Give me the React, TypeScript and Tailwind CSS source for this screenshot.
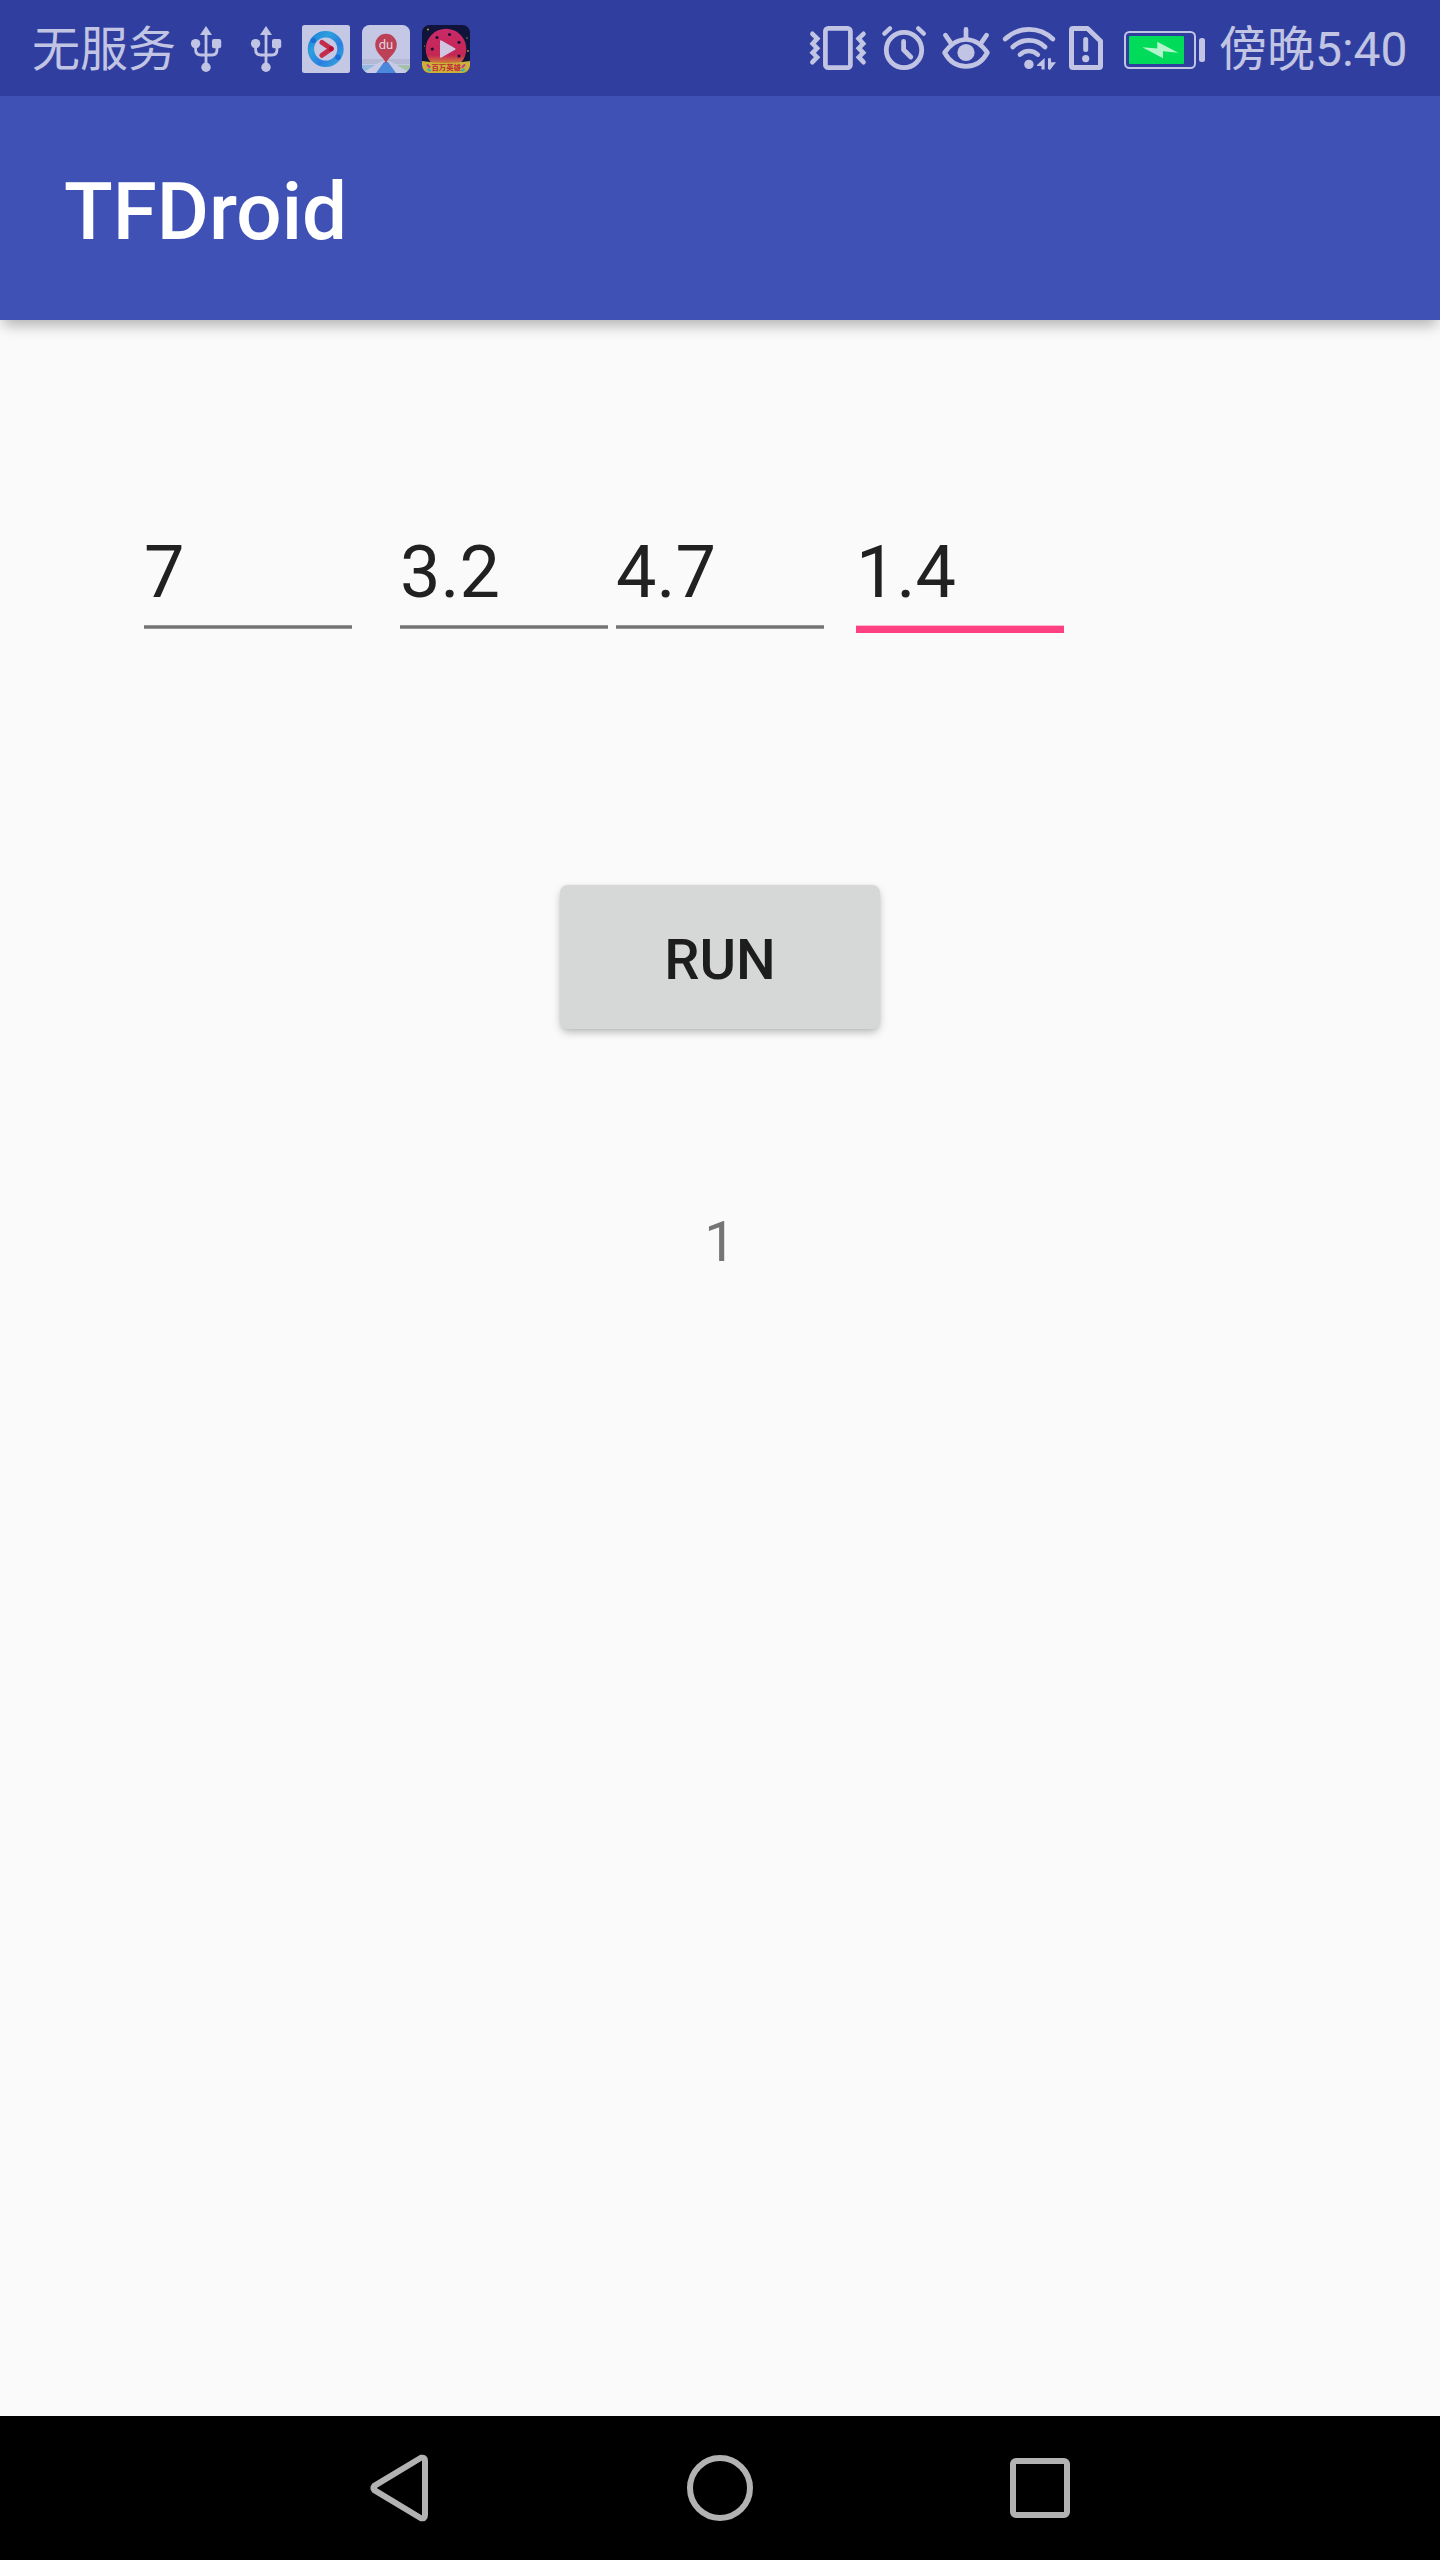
import React from "react";

const TINT = "#c1c5e3";

function UsbIcon() {
  return (
    <svg className="h-[96px] w-[60px]" viewBox="176 0 60 96" fill={TINT}>
      <path d="M206 26L212 35H200Z" />
      <path d="M206 30V66" stroke={TINT} strokeWidth="2.8" />
      <circle cx="206" cy="67.2" r="4.7" />
      <circle cx="195.6" cy="43.6" r="4.7" />
      <rect x="212" y="39" width="9.2" height="9.2" rx="2" />
      <path d="M195.6 46V49.5Q195.6 55 201 55H212Q217 55 217 49.5V46" fill="none" stroke={TINT} strokeWidth="2.8" />
    </svg>
  );
}

function VideoAppIcon() {
  return (
    <svg className="h-[96px] w-[60px]" viewBox="296 0 60 96">
      <defs>
        <linearGradient id="ring" x1="0" y1="0" x2="1" y2="1">
          <stop offset="0" stopColor="#1f82dc" />
          <stop offset="0.3" stopColor="#2e9fdc" />
          <stop offset="0.65" stopColor="#2a7fe0" />
          <stop offset="1" stopColor="#36a6dc" />
        </linearGradient>
      </defs>
      <rect x="302" y="25" width="48" height="48" rx="2.5" fill="#c4c8e4" />
      <circle cx="325.7" cy="49" r="14.8" fill="none" stroke="url(#ring)" strokeWidth="6.4" />
      <circle cx="313.4" cy="40.5" r="2.7" fill="#1a70d8" />
      <circle cx="338" cy="57.3" r="2.7" fill="#1a70d8" />
      <path d="M322 42.5L331.2 48.8L322 55.3" fill="none" stroke="#c42c4c" strokeWidth="5" strokeLinecap="round" strokeLinejoin="round" />
      <circle cx="331.2" cy="48.8" r="2.5" fill="#b80d32" />
    </svg>
  );
}

function MapAppIcon() {
  return (
    <svg className="h-[96px] w-[60px]" viewBox="356 0 60 96">
      <defs>
        <clipPath id="mapClip">
          <rect x="362" y="25" width="48" height="48" rx="7.5" />
        </clipPath>
      </defs>
      <g clipPath="url(#mapClip)">
        <rect x="362" y="25" width="48" height="48" fill="#c4c8e4" />
        <rect x="362" y="59" width="48" height="14" fill="#b6b9d6" />
        <path d="M362 65L378 64L366 73H362Z" fill="#93b9df" />
        <path d="M410 65L393 64L403 73H410Z" fill="#a4c2a8" />
        <path d="M362 64.5H410" stroke="#c4c8e4" strokeWidth="1.2" />
        <path d="M362 73L382 61H390L410 73Z" fill="#c8cbe6" />
        <path d="M384 62H388L396 73H376Z" fill="#4b88db" />
      </g>
      <path d="M386 64C384.5 57 375.2 54 375.2 44.5A10.8 10.8 0 0 1 396.8 44.5C396.8 54 387.5 57 386 64Z" fill="#bd4156" />
      <text x="386" y="49.2" textAnchor="middle" fontSize="13" className="font-['Roboto',sans-serif]" fill="#dfd3e4">du</text>
    </svg>
  );
}

function QuizAppIcon() {
  return (
    <svg className="h-[96px] w-[60px]" viewBox="416 0 60 96">
      <defs>
        <clipPath id="quizClip">
          <rect x="422" y="25" width="48" height="48" rx="7.5" />
        </clipPath>
        <linearGradient id="melon" x1="0" y1="0" x2="0" y2="1">
          <stop offset="0" stopColor="#ca2a68" />
          <stop offset="0.65" stopColor="#c42654" />
          <stop offset="0.88" stopColor="#cf8a34" />
          <stop offset="1" stopColor="#cfae34" />
        </linearGradient>
      </defs>
      <g clipPath="url(#quizClip)">
        <rect x="422" y="25" width="48" height="48" fill="#10133a" />
        <circle cx="446" cy="49" r="20.3" fill="url(#melon)" />
        <g fill="#1a0f38">
          <circle cx="449.5" cy="34.5" r="1.6" />
          <circle cx="437" cy="37.5" r="1.6" />
          <circle cx="459" cy="42.3" r="1.6" />
          <circle cx="432.3" cy="49" r="1.6" />
          <circle cx="459" cy="56" r="1.6" />
        </g>
        <g fill="#b5a43a">
          <circle cx="428" cy="29.5" r="1" />
          <circle cx="467" cy="38" r=".7" />
          <circle cx="468" cy="51" r=".9" />
          <circle cx="424.5" cy="46" r=".6" />
        </g>
        <path d="M441 41.3L454.5 49L441 56.7Z" fill="#d0c6e2" stroke="#d0c6e2" strokeWidth="2" strokeLinejoin="round" />
        <path d="M422 61Q446 65 470 61V73H422Z" fill="#cbb137" />
        <path d="M427.5 65L429.5 67M464.5 65L462.5 67" stroke="#c03a9c" strokeWidth="2" strokeLinecap="round" />
        <path d="M428 69.5L430 70.5M464 69.5L462 70.5" stroke="#2cb2c4" strokeWidth="2" strokeLinecap="round" />
        <text x="446.2" y="70.4" textAnchor="middle" fontSize="7.4" fontWeight="700" className="font-['Noto_Sans_CJK_SC',sans-serif]" fill="#c0283c">百万英雄</text>
      </g>
    </svg>
  );
}

function VibrateIcon() {
  return (
    <svg className="h-[96px] w-[72px]" viewBox="802 0 72 96" fill="none" stroke={TINT} strokeWidth="4.7">
      <rect x="825.4" y="28.4" width="25" height="39.3" rx="2.8" />
      <g strokeWidth="4.6" strokeLinecap="round" strokeLinejoin="miter">
        <path d="M812.4 33.8L817.3 38.6L812.7 43.7L817.1 48.2L812.7 52.8L817.1 57.2L812.4 62.2" />
        <path d="M863.5 33.8L858.6 38.6L863.2 43.7L858.8 48.2L863.2 52.8L858.8 57.2L863.5 62.2" />
      </g>
    </svg>
  );
}

function AlarmIcon() {
  return (
    <svg className="h-[96px] w-[60px]" viewBox="874 0 60 96" fill="none" stroke={TINT} strokeWidth="4.8" strokeLinecap="round" strokeLinejoin="round">
      <circle cx="904" cy="50" r="17.7" />
      <path d="M903.6 41.5V49.8L910.8 57" />
      <path d="M884.4 33.6L890 28.4M918.2 28.4L923.8 33.6" strokeWidth="4.4" />
    </svg>
  );
}

function EyeIcon() {
  return (
    <svg className="h-[96px] w-[62px]" viewBox="934 0 62 96" fill="none" stroke={TINT} strokeWidth="4.7" strokeLinecap="round" strokeLinejoin="round">
      <path d="M944.6 52.7C951 43.5 958 39.5 966 39.5C974 39.5 981 43.5 987.4 52.7C983 61 976 66.4 966 66.4C956 66.4 949 61 944.6 52.7Z" />
      <circle cx="966" cy="52.5" r="8.6" fill={TINT} stroke="none" />
      <path d="M966 29.4V38M945.4 35.2L950.4 42.4M986.6 35.2L981.6 42.4" />
    </svg>
  );
}

function WifiIcon() {
  return (
    <svg className="h-[96px] w-[66px]" viewBox="996 0 66 96" fill="none" stroke={TINT} strokeWidth="4.7" strokeLinecap="round">
      <path d="M1005.2 39A34.3 34.3 0 0 1 1052.8 39" />
      <path d="M1012.8 47A23 23 0 0 1 1045 47" />
      <path d="M1020 54.6A12.8 12.8 0 0 1 1037.8 54.6" />
      <circle cx="1028.9" cy="64.4" r="4.7" fill={TINT} stroke="none" />
      <path d="M1044.6 58V69.6H1041.5V66H1037L1037 65ZM1048 58.2H1051V62.2H1056L1050 70L1048 69Z" fill={TINT} stroke="none" />
    </svg>
  );
}

function SimIcon() {
  return (
    <svg className="h-[96px] w-[50px]" viewBox="1062 0 50 96" fill="none" stroke={TINT} strokeWidth="5" strokeLinecap="round" strokeLinejoin="round">
      <path d="M1073 28.5H1087.5L1100.5 41V66Q1100.5 67.5 1099 67.5H1073Q1071.5 67.5 1071.5 66V30Q1071.5 28.5 1073 28.5Z" />
      <path d="M1085.7 39.4V49.4" />
      <circle cx="1085.7" cy="58.6" r="3.6" fill={TINT} stroke="none" />
    </svg>
  );
}

function BatteryIcon() {
  return (
    <svg className="h-[96px] w-[106px]" viewBox="1112 0 106 96">
      <rect x="1125" y="32" width="70" height="36" rx="4.5" fill="none" stroke={TINT} strokeWidth="2" />
      <rect x="1129" y="36" width="55" height="28" rx="1" fill="#00dc5a" />
      <path d="M1142.3 47.3L1157.3 48.6V41.8L1178.2 52.7L1163 51.3V58.2Z" fill="#b3f4cd" />
      <rect x="1199" y="38" width="6" height="24" rx="2.5" fill={TINT} />
    </svg>
  );
}

function Field({ value, focused = false }: { value: string; focused?: boolean }) {
  return (
    <label className="flex h-[102px] w-[208px] flex-col">
      <input
        defaultValue={value}
        className="h-[84px] w-full bg-transparent p-0 text-[72px] leading-[84px] text-[#212121] outline-none"
      />
      {focused ? (
        <span className="mt-[10px] h-[8px] border-t border-[#ffb8d0] bg-[#ff4081]" />
      ) : (
        <span className="mt-[10px] h-[4px] border-y border-[#959595] bg-[#747474]" />
      )}
    </label>
  );
}

export default function App() {
  return (
    <div className="flex h-[2560px] w-[1440px] flex-col overflow-hidden bg-[#fafafa] font-['Roboto','Noto_Sans_CJK_SC',sans-serif]">
      <header className="z-10 shrink-0 shadow-[0_8px_14px_-3px_rgba(0,0,0,0.3)]">
        <div className="flex h-[96px] items-center justify-between bg-[#303f9f] pr-[32px] pl-[32px] text-[48px] leading-[96px] text-[#c1c5e3]">
          <div className="flex h-[96px]">
            <span className="h-[96px] w-[144px] pt-[2px] whitespace-nowrap">无服务</span>
            <UsbIcon />
            <UsbIcon />
            <VideoAppIcon />
            <MapAppIcon />
            <QuizAppIcon />
          </div>
          <div className="flex h-[96px]">
            <VibrateIcon />
            <AlarmIcon />
            <EyeIcon />
            <WifiIcon />
            <SimIcon />
            <BatteryIcon />
            <span className="h-[96px] w-[190px] pt-[2px] pl-px whitespace-nowrap">傍晚5:40</span>
          </div>
        </div>
        <div className="flex h-[224px] items-center bg-[#3f51b5] pt-[7px] pl-[64px]">
          <h1 className="text-[80px] leading-[94px] font-medium text-white">TFDroid</h1>
        </div>
      </header>

      <main className="flex flex-1 flex-col">
        <div className="mt-[211px] flex pl-[144px]">
          <Field value="7" />
          <div className="ml-[48px]">
            <Field value="3.2" />
          </div>
          <div className="ml-[8px]">
            <Field value="4.7" />
          </div>
          <div className="ml-[32px]">
            <Field value="1.4" focused />
          </div>
        </div>
        <button className="mt-[252px] h-[144px] w-[320px] self-center rounded-[8px] bg-[#d6d8d7] pt-[5px] text-[56px] font-medium text-[#1d1d1d] shadow-[0_4px_8px_-1px_rgba(0,0,0,0.28),0_0_3px_rgba(0,0,0,0.06)]">
          RUN
        </button>
        <p className="mt-[180px] self-center text-[56px] leading-[66px] text-[#757575]">1</p>
      </main>

      <nav className="flex h-[144px] shrink-0 items-center justify-center gap-[248px] bg-black">
        <svg className="h-[72px] w-[72px]" viewBox="364 2452 72 72" fill="none" stroke="#b2b2b2" strokeWidth="6" strokeLinejoin="round">
          <path d="M374.3 2485.9Q372.6 2488 374.3 2490.1L421 2518.2Q425 2519 425 2515V2461Q425 2457 421 2457.8Z" />
        </svg>
        <svg className="h-[72px] w-[72px]" viewBox="684 2452 72 72" fill="none" stroke="#b2b2b2" strokeWidth="6">
          <circle cx="720" cy="2488" r="30" />
        </svg>
        <svg className="h-[72px] w-[72px]" viewBox="1004 2452 72 72" fill="none" stroke="#b2b2b2" strokeWidth="6">
          <rect x="1013" y="2461" width="54" height="54" rx="3" />
        </svg>
      </nav>
    </div>
  );
}
